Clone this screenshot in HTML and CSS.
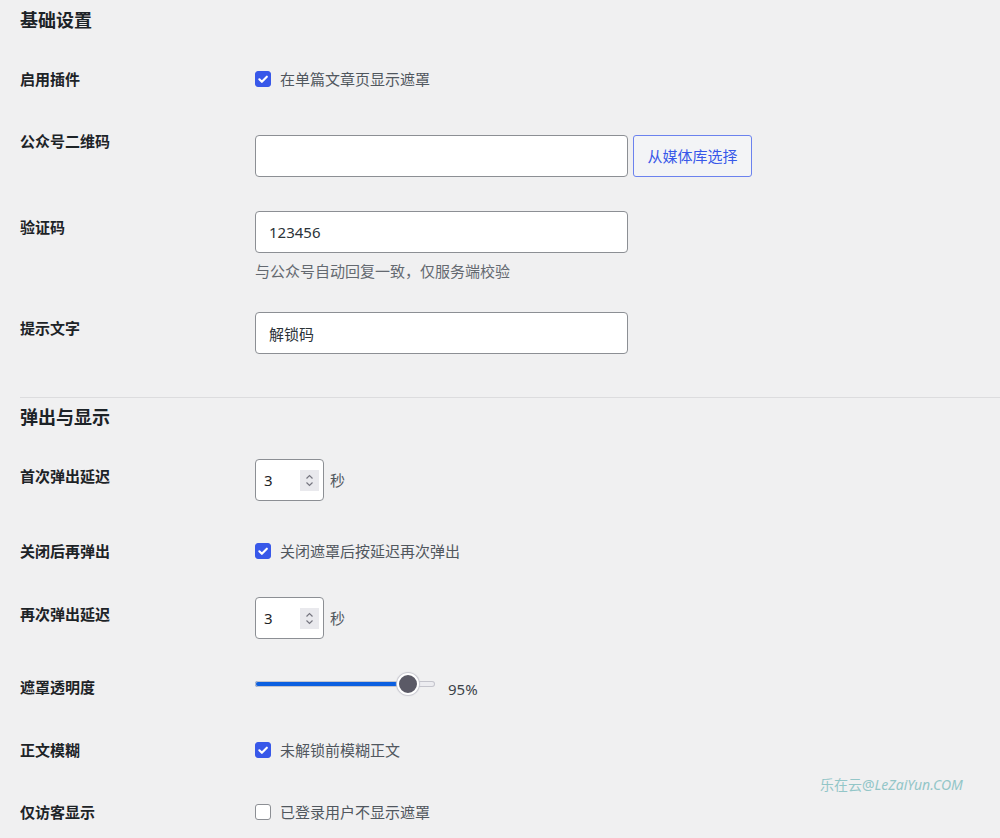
FILE: index.html
```html
<!DOCTYPE html>
<html>
<head lang="zh-CN">
    <meta charset="UTF-8">
    <title>设置</title>
    <link rel="stylesheet" href="styles.css">
</head>
<body>
<div class="wrap">
    <h2 class="title">基础设置</h2>

    <div class="row check">
        <div class="label">启用插件</div>
        <label class="field opt">
            <span class="box on"><svg viewBox="0 0 16 16"><path d="M3.8 8.3l2.9 2.9L12.4 5.4"/></svg></span>
            在单篇文章页显示遮罩
        </label>
    </div>

    <div class="row media">
        <div class="label">公众号二维码</div>
        <div class="field inline">
            <input class="text" type="text" value="">
            <button class="btn" type="button">从媒体库选择</button>
        </div>
    </div>

    <div class="row">
        <div class="label">验证码</div>
        <div class="field">
            <input class="text" type="text" value="123456">
            <p class="desc">与公众号自动回复一致，仅服务端校验</p>
        </div>
    </div>

    <div class="row after-desc">
        <div class="label">提示文字</div>
        <div class="field">
            <input class="text" type="text" value="解锁码">
        </div>
    </div>

    <hr class="sep">

    <h2 class="title">弹出与显示</h2>

    <div class="row num">
        <div class="label">首次弹出延迟</div>
        <div class="field inline">
            <div class="number">
                <span>3</span>
                <svg class="spin" viewBox="0 0 19 21"><path d="M6.5 8.5l3-3 3 3M6.5 12.5l3 3 3-3"/></svg>
            </div>
            <span class="unit">秒</span>
        </div>
    </div>

    <div class="row check">
        <div class="label">关闭后再弹出</div>
        <label class="field opt">
            <span class="box on"><svg viewBox="0 0 16 16"><path d="M3.8 8.3l2.9 2.9L12.4 5.4"/></svg></span>
            关闭遮罩后按延迟再次弹出
        </label>
    </div>

    <div class="row num">
        <div class="label">再次弹出延迟</div>
        <div class="field inline">
            <div class="number">
                <span>3</span>
                <svg class="spin" viewBox="0 0 19 21"><path d="M6.5 8.5l3-3 3 3M6.5 12.5l3 3 3-3"/></svg>
            </div>
            <span class="unit">秒</span>
        </div>
    </div>

    <div class="row slide">
        <div class="label">遮罩透明度</div>
        <div class="field inline">
            <input class="range" type="range" min="50" max="100" value="95">
            <span class="val">95%</span>
        </div>
    </div>

    <div class="row check">
        <div class="label">正文模糊</div>
        <label class="field opt">
            <span class="box on"><svg viewBox="0 0 16 16"><path d="M3.8 8.3l2.9 2.9L12.4 5.4"/></svg></span>
            未解锁前模糊正文
        </label>
    </div>

    <div class="row check">
        <div class="label">仅访客显示</div>
        <label class="field opt">
            <span class="box"></span>
            已登录用户不显示遮罩
        </label>
    </div>
</div>

<div class="mark">乐在云@<i>LeZaiYun.COM</i></div>
</body>
</html>
```

FILE: styles.css
```css
* {
    box-sizing: border-box;
}

body {
    margin: 0;
    background: #f0f0f1;
    font-family: "Noto Sans", "Noto Sans CJK SC", sans-serif;
    font-size: 15px;
    color: #3c434a;
}

.wrap {
    padding: 8px 0 0 20px;
}

.title {
    margin: 0;
    font-size: 18px;
    line-height: 24px;
    font-weight: bold;
    color: #1d2327;
}

.row {
    display: grid;
    grid-template-columns: 235px 1fr;
    align-items: start;
    margin-top: 34px;
}

.title + .row {
    margin-top: 33px;
}

.title + .row.num {
    margin-top: 30px;
}

.row.after-desc {
    margin-top: 31px;
}

.row.num + .row.check {
    margin-top: 36px;
}

.row.check + .row.num {
    margin-top: 32px;
}

.row.slide + .row.check {
    margin-top: 37px;
}

.label {
    font-weight: bold;
    line-height: 20px;
    color: #1d2327;
    padding-top: 6px;
}

.row.check {
    padding: 4px 0;
}

.row.check .label {
    padding-top: 0;
}

.row.media {
    padding-top: 4px;
}

.row.media .label {
    padding-top: 0;
}

.row.media .field {
    margin-top: 4px;
}

.row.num .label {
    padding-top: 7px;
}

.row.slide .label {
    padding-top: 4px;
}

.field {
    line-height: 20px;
}

.inline {
    display: flex;
    align-items: flex-start;
}

.opt {
    display: flex;
    align-items: center;
    gap: 9px;
    color: #50575e;
    cursor: pointer;
}

.box {
    width: 16px;
    height: 16px;
    border: 1px solid #8c8f94;
    border-radius: 3px;
    background: #fff;
    display: flex;
}

.box.on {
    background: #3858e9;
    border-color: #3858e9;
}

.box svg {
    width: 14px;
    height: 14px;
    fill: none;
    stroke: #fff;
    stroke-width: 2.4;
    stroke-linecap: round;
    stroke-linejoin: round;
}

.text {
    display: block;
    width: 373px;
    height: 42px;
    margin: 0;
    padding: 0 13px;
    border: 1px solid #8c8f94;
    border-radius: 4px;
    background: #fff;
    font: inherit;
    color: #2c3338;
}

.btn {
    width: 119px;
    height: 42px;
    margin-left: 5px;
    border: 1px solid #6b82ee;
    border-radius: 3px;
    background: #f3f4f6;
    font: inherit;
    color: #3858e9;
}

.desc {
    margin: 8px 0 0;
    line-height: 20px;
    color: #646970;
}

.sep {
    margin: 43px 0 0;
    border: 0;
    border-top: 1px solid #dcdcde;
}

.sep + .title {
    margin-top: 7px;
}

.number {
    width: 69px;
    height: 42px;
    border: 1px solid #8c8f94;
    border-radius: 4px;
    background: #fff;
    display: flex;
    align-items: center;
    justify-content: space-between;
    padding: 0 4px 0 8px;
    color: #1d2327;
}

.spin {
    width: 19px;
    height: 21px;
    background: #e9e9ed;
    fill: none;
    stroke: #767680;
    stroke-width: 1.2;
}

.unit {
    margin: 11px 0 0 6px;
    color: #50575e;
}

.range {
    -webkit-appearance: none;
    appearance: none;
    width: 180px;
    height: 22px;
    margin: 0;
    background: transparent;
}

.range::-webkit-slider-runnable-track {
    height: 6px;
    border-radius: 3px;
    background: linear-gradient(to right, #0b5fe0 0, #0b5fe0 85%, #ececf0 85%);
    box-shadow: inset 0 0 0 1px #c4c4cc;
}

.range::-webkit-slider-thumb {
    -webkit-appearance: none;
    width: 22px;
    height: 22px;
    margin-top: -8px;
    border-radius: 50%;
    background: #5b5a66;
    border: 2px solid #fff;
    box-shadow: 0 0 1px 1px #c8c8d0;
}

.val {
    margin: 6px 0 0 13px;
    color: #3c434a;
}

.mark {
    position: absolute;
    left: 820px;
    top: 775px;
    font-size: 14px;
    line-height: 20px;
    color: #93c6c8;
}

.mark i {
    font-style: italic;
}
```
